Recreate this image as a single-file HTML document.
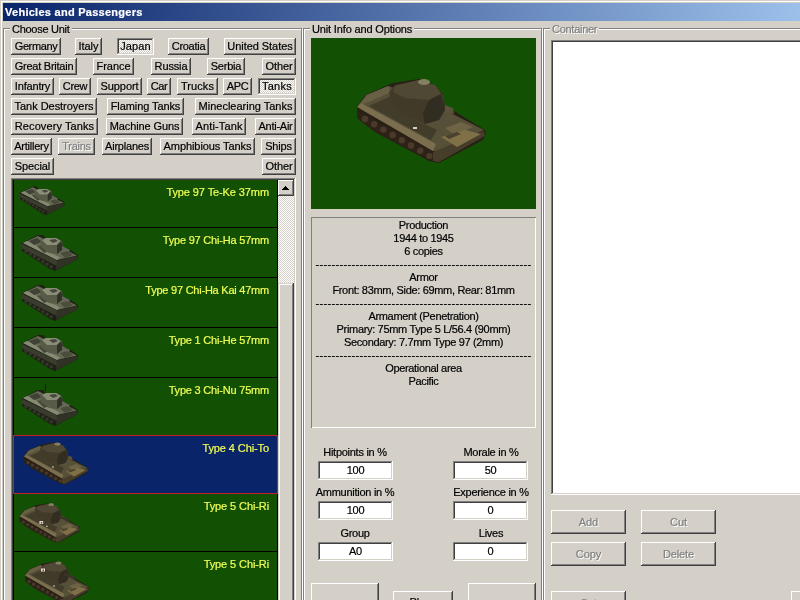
<!DOCTYPE html>
<html><head><meta charset="utf-8"><title>Vehicles and Passengers</title>
<style>
html,body{margin:0;padding:0}
body{width:800px;height:600px;overflow:hidden;background:#d4d0c8;position:relative;font-family:"Liberation Sans",sans-serif;font-size:11px;color:#000;letter-spacing:-0.27px;-webkit-text-stroke:0.2px}
div{position:absolute;box-sizing:border-box}
.title{left:3px;top:3px;width:797px;height:18px;background:linear-gradient(to right,#0a246a 0%,#9cc0ea 100%);color:#fff;font-weight:bold;font-size:11px;line-height:18px;padding-left:2px;white-space:nowrap;letter-spacing:0.27px}
.gb{border:1px solid #808080;box-shadow:1px 1px 0 #fff,inset 1px 1px 0 #fff}
.lg{background:#d4d0c8;padding:0 2px;height:13px;line-height:13px;white-space:nowrap}
.lg.dis{color:#808080;text-shadow:1px 1px 0 #fff}
.b{text-align:center;white-space:nowrap;letter-spacing:-0.1px;background:#d4d0c8;box-shadow:inset -1px -1px 0 #404040,inset 1px 1px 0 #fff,inset -2px -2px 0 #808080,inset 2px 2px 0 #d4d0c8}
.b.p{background:repeating-conic-gradient(#fff 0% 25%,#d4d0c8 0% 50%) 0 0/2px 2px;box-shadow:inset -1px -1px 0 #fff,inset 1px 1px 0 #808080,inset -2px -2px 0 #d4d0c8,inset 2px 2px 0 #404040}
.b.d{color:#808080;text-shadow:1px 1px 0 #fff}
.sunk{box-shadow:inset -1px -1px 0 #fff,inset 1px 1px 0 #808080,inset -2px -2px 0 #d4d0c8,inset 2px 2px 0 #404040}
.ed{background:#fff;text-align:center;line-height:19px;height:19px;width:75px}
.lbl{text-align:center;white-space:nowrap;height:13px;line-height:13px;width:120px}
.it{left:0;width:265px;border:solid #000;border-width:0 1px 1px 1px;background:#125003}
.it span{letter-spacing:-0.1px;position:absolute;right:8px;top:6px;color:#f0ff55;white-space:nowrap;line-height:13px}
.info{letter-spacing:-0.33px;text-align:center;line-height:13px;white-space:nowrap;overflow:hidden}
.dash{letter-spacing:0.34px}
svg{position:absolute;display:block}
</style></head><body>
<div id="root" style="left:0;top:0;width:800px;height:600px;overflow:hidden;will-change:transform">

<div style="left:1px;top:1px;width:799px;height:1px;background:#fff"></div>
<div style="left:1px;top:1px;width:1px;height:599px;background:#fff"></div>
<div class="title">Vehicles and Passengers</div>
<div class="gb" style="left:3px;top:28px;width:299px;height:600px"></div>
<div class="lg" style="left:10px;top:23px">Choose Unit</div>
<div class="gb" style="left:303px;top:28px;width:239px;height:600px"></div>
<div class="lg" style="left:310px;top:23px;letter-spacing:-0.15px">Unit Info and Options</div>
<div class="gb" style="left:543px;top:28px;width:300px;height:600px"></div>
<div class="lg dis" style="left:550px;top:23px">Container</div>
<div class="b " style="left:11px;top:38px;width:50px;height:17px;line-height:16px;letter-spacing:-0.38px">Germany</div>
<div class="b " style="left:75px;top:38px;width:27px;height:17px;line-height:16px;letter-spacing:-0.04px">Italy</div>
<div class="b p" style="left:117px;top:38px;width:37px;height:17px;line-height:16px;letter-spacing:0.1px">Japan</div>
<div class="b " style="left:168px;top:38px;width:41px;height:17px;line-height:16px;letter-spacing:-0.27px">Croatia</div>
<div class="b " style="left:224px;top:38px;width:72px;height:17px;line-height:16px;letter-spacing:-0.05px">United States</div>
<div class="b " style="left:11px;top:58px;width:66px;height:17px;line-height:16px;letter-spacing:-0.25px">Great Britain</div>
<div class="b " style="left:93px;top:58px;width:41px;height:17px;line-height:16px;letter-spacing:-0.04px">France</div>
<div class="b " style="left:151px;top:58px;width:40px;height:17px;line-height:16px;letter-spacing:-0.14px">Russia</div>
<div class="b " style="left:207px;top:58px;width:38px;height:17px;line-height:16px;letter-spacing:-0.2px">Serbia</div>
<div class="b " style="left:262px;top:58px;width:34px;height:17px;line-height:16px;letter-spacing:-0.1px">Other</div>
<div class="b " style="left:11px;top:78px;width:43px;height:17px;line-height:16px;letter-spacing:-0.16px">Infantry</div>
<div class="b " style="left:59px;top:78px;width:32px;height:17px;line-height:16px;letter-spacing:-0.32px">Crew</div>
<div class="b " style="left:97px;top:78px;width:45px;height:17px;line-height:16px;letter-spacing:-0.08px">Support</div>
<div class="b " style="left:147px;top:78px;width:24px;height:17px;line-height:16px;letter-spacing:-0.38px">Car</div>
<div class="b " style="left:177px;top:78px;width:41px;height:17px;line-height:16px;letter-spacing:0.07px">Trucks</div>
<div class="b " style="left:223px;top:78px;width:29px;height:17px;line-height:16px;letter-spacing:-0.34px">APC</div>
<div class="b p" style="left:258px;top:78px;width:38px;height:17px;line-height:16px;letter-spacing:0.25px">Tanks</div>
<div class="b " style="left:11px;top:98px;width:86px;height:17px;line-height:16px;letter-spacing:-0.03px">Tank Destroyers</div>
<div class="b " style="left:107px;top:98px;width:77px;height:17px;line-height:16px;letter-spacing:-0.09px">Flaming Tanks</div>
<div class="b " style="left:195px;top:98px;width:101px;height:17px;line-height:16px;letter-spacing:-0.01px">Mineclearing Tanks</div>
<div class="b " style="left:11px;top:118px;width:87px;height:17px;line-height:16px;letter-spacing:0.1px">Recovery Tanks</div>
<div class="b " style="left:106px;top:118px;width:77px;height:17px;line-height:16px;letter-spacing:-0.11px">Machine Guns</div>
<div class="b " style="left:192px;top:118px;width:54px;height:17px;line-height:16px;letter-spacing:0.13px">Anti-Tank</div>
<div class="b " style="left:255px;top:118px;width:41px;height:17px;line-height:16px;letter-spacing:-0.26px">Anti-Air</div>
<div class="b " style="left:11px;top:138px;width:41px;height:17px;line-height:16px;letter-spacing:-0.23px">Artillery</div>
<div class="b d" style="left:58px;top:138px;width:37px;height:17px;line-height:16px;letter-spacing:-0.26px">Trains</div>
<div class="b " style="left:102px;top:138px;width:50px;height:17px;line-height:16px;letter-spacing:-0.21px">Airplanes</div>
<div class="b " style="left:160px;top:138px;width:95px;height:17px;line-height:16px;letter-spacing:-0.07px">Amphibious Tanks</div>
<div class="b " style="left:261px;top:138px;width:35px;height:17px;line-height:16px;letter-spacing:-0.19px">Ships</div>
<div class="b " style="left:11px;top:158px;width:43px;height:17px;line-height:16px;letter-spacing:-0.1px">Special</div>
<div class="b " style="left:262px;top:158px;width:34px;height:17px;line-height:16px;letter-spacing:-0.1px">Other</div>
<div class="sunk" style="left:11px;top:178px;width:285px;height:440px"></div>
<div id="list" style="left:13px;top:180px;width:265px;height:430px;overflow:hidden;background:#125003">
<div class="it" style="top:0px;height:48px"><span style="letter-spacing:-0.1px">Type 97 Te-Ke 37mm</span></div>
<div class="it" style="top:48px;height:50px"><span style="letter-spacing:-0.2px">Type 97 Chi-Ha 57mm</span></div>
<div class="it" style="top:98px;height:50px"><span style="letter-spacing:-0.23px">Type 97 Chi-Ha Kai 47mm</span></div>
<div class="it" style="top:148px;height:50px"><span style="letter-spacing:-0.2px">Type 1 Chi-He 57mm</span></div>
<div class="it" style="top:198px;height:57px;border-bottom-width:0"><span style="letter-spacing:-0.2px">Type 3 Chi-Nu 75mm</span></div>
<div class="it" style="top:255px;height:59px;background:#0a246a;border:1px solid #c81e28"><span style="letter-spacing:-0.1px">Type 4 Chi-To</span></div>
<div class="it" style="top:314px;height:58px"><span style="letter-spacing:-0.1px">Type 5 Chi-Ri</span></div>
<div class="it" style="top:372px;height:59px"><span style="letter-spacing:-0.1px">Type 5 Chi-Ri</span></div>
</div>
<svg style="left:12.9px;top:180.5px;filter:blur(0.45px)" width="63.2" height="39.5" viewBox="0 0 80 50"><polygon points="9,15 25,7 30,7 33,10 43,10 49,13 50,19 56,21 65,27 65,31 42,43 37,41 9,23" fill="#1e2016"/><polygon points="10,15 25,8 64,27.5 44,32" fill="#666a54"/><polygon points="10,15 14,13 47,29.5 44,32" fill="#868a72"/><polygon points="16,13 24,10 29,14 21,17" fill="#3f4234"/><polygon points="24,18 30,17 36,23 31,25" fill="#474a3a"/><polygon points="47,25 55,23 60,27 52,30" fill="#4a4d3a"/><polygon points="9,16 44,32.5 44,38 9,20.5" fill="#3a3d2e"/><circle cx="13.0" cy="23.5" r="1.7" fill="#35372a"/><circle cx="17.2" cy="26.1" r="1.7" fill="#35372a"/><circle cx="21.4" cy="28.6" r="1.7" fill="#35372a"/><circle cx="25.6" cy="31.1" r="1.7" fill="#35372a"/><circle cx="29.8" cy="33.7" r="1.7" fill="#35372a"/><circle cx="34.0" cy="36.2" r="1.7" fill="#35372a"/><circle cx="38.2" cy="38.8" r="1.7" fill="#35372a"/><polygon points="44,32.5 64,28 65,31 43,42" fill="#303226"/><polygon points="27,12 33,10 43,10 49,13 50,21 44,26 36,25 28,19" fill="#575b48"/><polygon points="29,12 33,10 43,10 48,13 44,17 34,17" fill="#8a8e76"/><polygon points="36,12 42,11 45,13 40,15" fill="#44473a"/><polygon points="44,17 48,13 50,21 44,26" fill="#303226"/><polygon points="49,18 57,22 56,24 49,21" fill="#64685a"/></svg>
<svg style="left:13px;top:228px;filter:blur(0.45px)" width="80.0" height="50.0" viewBox="0 0 80 50"><polygon points="9,15 25,7 30,7 33,10 43,10 49,13 50,19 56,21 65,27 65,31 42,43 37,41 9,23" fill="#1e2016"/><polygon points="10,15 25,8 64,27.5 44,32" fill="#666a54"/><polygon points="10,15 14,13 47,29.5 44,32" fill="#868a72"/><polygon points="16,13 24,10 29,14 21,17" fill="#3f4234"/><polygon points="24,18 30,17 36,23 31,25" fill="#474a3a"/><polygon points="47,25 55,23 60,27 52,30" fill="#4a4d3a"/><polygon points="9,16 44,32.5 44,38 9,20.5" fill="#3a3d2e"/><circle cx="13.0" cy="23.5" r="1.7" fill="#35372a"/><circle cx="17.2" cy="26.1" r="1.7" fill="#35372a"/><circle cx="21.4" cy="28.6" r="1.7" fill="#35372a"/><circle cx="25.6" cy="31.1" r="1.7" fill="#35372a"/><circle cx="29.8" cy="33.7" r="1.7" fill="#35372a"/><circle cx="34.0" cy="36.2" r="1.7" fill="#35372a"/><circle cx="38.2" cy="38.8" r="1.7" fill="#35372a"/><polygon points="44,32.5 64,28 65,31 43,42" fill="#303226"/><polygon points="27,12 33,10 43,10 49,13 50,21 44,26 36,25 28,19" fill="#575b48"/><polygon points="29,12 33,10 43,10 48,13 44,17 34,17" fill="#8a8e76"/><polygon points="36,12 42,11 45,13 40,15" fill="#44473a"/><polygon points="44,17 48,13 50,21 44,26" fill="#303226"/><polygon points="49,18 57,22 56,24 49,21" fill="#64685a"/></svg>
<svg style="left:13px;top:278px;filter:blur(0.45px)" width="80.0" height="50.0" viewBox="0 0 80 50"><polygon points="9,15 25,7 30,7 33,10 43,10 49,13 50,19 56,21 65,27 65,31 42,43 37,41 9,23" fill="#1e2016"/><polygon points="10,15 25,8 64,27.5 44,32" fill="#666a54"/><polygon points="10,15 14,13 47,29.5 44,32" fill="#868a72"/><polygon points="16,13 24,10 29,14 21,17" fill="#3f4234"/><polygon points="24,18 30,17 36,23 31,25" fill="#474a3a"/><polygon points="47,25 55,23 60,27 52,30" fill="#4a4d3a"/><polygon points="9,16 44,32.5 44,38 9,20.5" fill="#3a3d2e"/><circle cx="13.0" cy="23.5" r="1.7" fill="#35372a"/><circle cx="17.2" cy="26.1" r="1.7" fill="#35372a"/><circle cx="21.4" cy="28.6" r="1.7" fill="#35372a"/><circle cx="25.6" cy="31.1" r="1.7" fill="#35372a"/><circle cx="29.8" cy="33.7" r="1.7" fill="#35372a"/><circle cx="34.0" cy="36.2" r="1.7" fill="#35372a"/><circle cx="38.2" cy="38.8" r="1.7" fill="#35372a"/><polygon points="44,32.5 64,28 65,31 43,42" fill="#303226"/><polygon points="27,12 33,10 43,10 49,13 50,21 44,26 36,25 28,19" fill="#575b48"/><polygon points="29,12 33,10 43,10 48,13 44,17 34,17" fill="#8a8e76"/><polygon points="36,12 42,11 45,13 40,15" fill="#44473a"/><polygon points="44,17 48,13 50,21 44,26" fill="#303226"/><polygon points="49,18 57,22 56,24 49,21" fill="#64685a"/></svg>
<svg style="left:13px;top:328px;filter:blur(0.45px)" width="80.0" height="50.0" viewBox="0 0 80 50"><polygon points="9,15 25,7 30,7 33,10 43,10 49,13 50,19 56,21 65,27 65,31 42,43 37,41 9,23" fill="#1e2016"/><polygon points="10,15 25,8 64,27.5 44,32" fill="#666a54"/><polygon points="10,15 14,13 47,29.5 44,32" fill="#868a72"/><polygon points="16,13 24,10 29,14 21,17" fill="#3f4234"/><polygon points="24,18 30,17 36,23 31,25" fill="#474a3a"/><polygon points="47,25 55,23 60,27 52,30" fill="#4a4d3a"/><polygon points="9,16 44,32.5 44,38 9,20.5" fill="#3a3d2e"/><circle cx="13.0" cy="23.5" r="1.7" fill="#35372a"/><circle cx="17.2" cy="26.1" r="1.7" fill="#35372a"/><circle cx="21.4" cy="28.6" r="1.7" fill="#35372a"/><circle cx="25.6" cy="31.1" r="1.7" fill="#35372a"/><circle cx="29.8" cy="33.7" r="1.7" fill="#35372a"/><circle cx="34.0" cy="36.2" r="1.7" fill="#35372a"/><circle cx="38.2" cy="38.8" r="1.7" fill="#35372a"/><polygon points="44,32.5 64,28 65,31 43,42" fill="#303226"/><polygon points="27,12 33,10 43,10 49,13 50,21 44,26 36,25 28,19" fill="#575b48"/><polygon points="29,12 33,10 43,10 48,13 44,17 34,17" fill="#8a8e76"/><polygon points="36,12 42,11 45,13 40,15" fill="#44473a"/><polygon points="44,17 48,13 50,21 44,26" fill="#303226"/><polygon points="49,18 57,22 56,24 49,21" fill="#64685a"/></svg>
<svg style="left:13px;top:383px;filter:blur(0.45px)" width="80.0" height="50.0" viewBox="0 0 80 50"><polygon points="9,15 25,7 30,7 33,10 43,10 49,13 50,19 56,21 65,27 65,31 42,43 37,41 9,23" fill="#1e2016"/><polygon points="10,15 25,8 64,27.5 44,32" fill="#666a54"/><polygon points="10,15 14,13 47,29.5 44,32" fill="#868a72"/><polygon points="16,13 24,10 29,14 21,17" fill="#3f4234"/><polygon points="24,18 30,17 36,23 31,25" fill="#474a3a"/><polygon points="47,25 55,23 60,27 52,30" fill="#4a4d3a"/><polygon points="9,16 44,32.5 44,38 9,20.5" fill="#3a3d2e"/><circle cx="13.0" cy="23.5" r="1.7" fill="#35372a"/><circle cx="17.2" cy="26.1" r="1.7" fill="#35372a"/><circle cx="21.4" cy="28.6" r="1.7" fill="#35372a"/><circle cx="25.6" cy="31.1" r="1.7" fill="#35372a"/><circle cx="29.8" cy="33.7" r="1.7" fill="#35372a"/><circle cx="34.0" cy="36.2" r="1.7" fill="#35372a"/><circle cx="38.2" cy="38.8" r="1.7" fill="#35372a"/><polygon points="44,32.5 64,28 65,31 43,42" fill="#303226"/><polygon points="27,12 33,10 43,10 49,13 50,21 44,26 36,25 28,19" fill="#575b48"/><polygon points="29,12 33,10 43,10 48,13 44,17 34,17" fill="#8a8e76"/><polygon points="36,12 42,11 45,13 40,15" fill="#44473a"/><polygon points="44,17 48,13 50,21 44,26" fill="#303226"/><polygon points="49,18 57,22 56,24 49,21" fill="#64685a"/><path d="M32.5,8 L32.5,1" stroke="#1c1e14" stroke-width="1.2"/></svg>
<svg style="left:18px;top:437.5px;filter:blur(0.35px)" width="80.0" height="52.5" viewBox="0 0 160 105"><polygon points="12,37 20,25 43,15 48,13 74,9 88,14 98,24 100,36 109,41 140,60 141,64 138,70 94,93 84,91 60,78 30,62 12,48" fill="#281f15"/><polygon points="13,36 21,25 44,16 100,40 139,60 92,82 86,80" fill="#565038"/><polygon points="14,35 22,25 43,16 46,22 24,32" fill="#676044"/><polygon points="24,36 46,26 66,48 92,60 86,70" fill="#423c2a"/><polygon points="12,37 16,33 91,74 88,81" fill="#7a6e4e"/><polygon points="12,41 88,82 88,91 60,78 30,62 12,48" fill="#2e2218"/><circle cx="20.0" cy="49.0" r="3.2" fill="#4a3a29"/><circle cx="29.2" cy="54.3" r="3.2" fill="#4a3a29"/><circle cx="38.4" cy="59.6" r="3.2" fill="#4a3a29"/><circle cx="47.6" cy="64.9" r="3.2" fill="#4a3a29"/><circle cx="56.8" cy="70.2" r="3.2" fill="#4a3a29"/><circle cx="66.0" cy="75.5" r="3.2" fill="#4a3a29"/><circle cx="75.2" cy="80.8" r="3.2" fill="#4a3a29"/><circle cx="84.4" cy="86.1" r="3.2" fill="#4a3a29"/><polygon points="88,82 139,61 140,66 94,92 88,91" fill="#463e2b"/><polygon points="100,58 116,52 128,57 110,65" fill="#6e6345"/><polygon points="96,67 120,60 136,64 112,77" fill="#7f7048"/><polygon points="100,66 112,62 116,64 104,69" fill="#4a422e"/><polygon points="44,22 50,15 74,10 90,15 99,26 100,40 94,50 80,54 66,48 48,36" fill="#413a29"/><polygon points="50,16 74,10 90,15 96,24 84,30 60,28 48,22" fill="#4f4834"/><polygon points="84,30 96,24 100,40 94,50 80,54 78,44" fill="#322d21"/><ellipse cx="79" cy="12" rx="6" ry="3" fill="#868063"/><polygon points="100,35 108,38 109,44 100,42" fill="#5a523a"/><rect x="68" y="57" width="4" height="2" fill="#d8d0c0"/></svg>
<svg style="left:13.9px;top:498.8px;filter:blur(0.35px)" width="75.2" height="49.3" viewBox="0 0 160 105"><polygon points="12,37 20,25 43,15 48,13 74,9 88,14 98,24 100,36 109,41 140,60 141,64 138,70 94,93 84,91 60,78 30,62 12,48" fill="#281f15"/><polygon points="13,36 21,25 44,16 100,40 139,60 92,82 86,80" fill="#565038"/><polygon points="14,35 22,25 43,16 46,22 24,32" fill="#676044"/><polygon points="24,36 46,26 66,48 92,60 86,70" fill="#423c2a"/><polygon points="12,37 16,33 91,74 88,81" fill="#7a6e4e"/><polygon points="12,41 88,82 88,91 60,78 30,62 12,48" fill="#2e2218"/><circle cx="20.0" cy="49.0" r="3.2" fill="#4a3a29"/><circle cx="29.2" cy="54.3" r="3.2" fill="#4a3a29"/><circle cx="38.4" cy="59.6" r="3.2" fill="#4a3a29"/><circle cx="47.6" cy="64.9" r="3.2" fill="#4a3a29"/><circle cx="56.8" cy="70.2" r="3.2" fill="#4a3a29"/><circle cx="66.0" cy="75.5" r="3.2" fill="#4a3a29"/><circle cx="75.2" cy="80.8" r="3.2" fill="#4a3a29"/><circle cx="84.4" cy="86.1" r="3.2" fill="#4a3a29"/><polygon points="88,82 139,61 140,66 94,92 88,91" fill="#463e2b"/><polygon points="100,58 116,52 128,57 110,65" fill="#6e6345"/><polygon points="96,67 120,60 136,64 112,77" fill="#7f7048"/><polygon points="100,66 112,62 116,64 104,69" fill="#4a422e"/><polygon points="44,22 50,15 74,10 90,15 99,26 100,40 94,50 80,54 66,48 48,36" fill="#413a29"/><polygon points="50,16 74,10 90,15 96,24 84,30 60,28 48,22" fill="#4f4834"/><polygon points="84,30 96,24 100,40 94,50 80,54 78,44" fill="#322d21"/><ellipse cx="79" cy="12" rx="6" ry="3" fill="#868063"/><polygon points="100,35 108,38 109,44 100,42" fill="#5a523a"/><rect x="68" y="57" width="4" height="2" fill="#d8d0c0"/><path d="M97,37 L118,47" stroke="#3a3426" stroke-width="5"/><rect x="54" y="47" width="8" height="6" fill="#e8e0d8"/><rect x="57" y="49" width="3" height="3" fill="#c02020"/></svg>
<svg style="left:19px;top:556.5px;filter:blur(0.35px)" width="80.0" height="52.5" viewBox="0 0 160 105"><polygon points="12,37 20,25 43,15 48,13 74,9 88,14 98,24 100,36 109,41 140,60 141,64 138,70 94,93 84,91 60,78 30,62 12,48" fill="#281f15"/><polygon points="13,36 21,25 44,16 100,40 139,60 92,82 86,80" fill="#565038"/><polygon points="14,35 22,25 43,16 46,22 24,32" fill="#676044"/><polygon points="24,36 46,26 66,48 92,60 86,70" fill="#423c2a"/><polygon points="12,37 16,33 91,74 88,81" fill="#7a6e4e"/><polygon points="12,41 88,82 88,91 60,78 30,62 12,48" fill="#2e2218"/><circle cx="20.0" cy="49.0" r="3.2" fill="#4a3a29"/><circle cx="29.2" cy="54.3" r="3.2" fill="#4a3a29"/><circle cx="38.4" cy="59.6" r="3.2" fill="#4a3a29"/><circle cx="47.6" cy="64.9" r="3.2" fill="#4a3a29"/><circle cx="56.8" cy="70.2" r="3.2" fill="#4a3a29"/><circle cx="66.0" cy="75.5" r="3.2" fill="#4a3a29"/><circle cx="75.2" cy="80.8" r="3.2" fill="#4a3a29"/><circle cx="84.4" cy="86.1" r="3.2" fill="#4a3a29"/><polygon points="88,82 139,61 140,66 94,92 88,91" fill="#463e2b"/><polygon points="100,58 116,52 128,57 110,65" fill="#6e6345"/><polygon points="96,67 120,60 136,64 112,77" fill="#7f7048"/><polygon points="100,66 112,62 116,64 104,69" fill="#4a422e"/><polygon points="44,22 50,15 74,10 90,15 99,26 100,40 94,50 80,54 66,48 48,36" fill="#413a29"/><polygon points="50,16 74,10 90,15 96,24 84,30 60,28 48,22" fill="#4f4834"/><polygon points="84,30 96,24 100,40 94,50 80,54 78,44" fill="#322d21"/><ellipse cx="79" cy="12" rx="6" ry="3" fill="#868063"/><polygon points="100,35 108,38 109,44 100,42" fill="#5a523a"/><rect x="68" y="57" width="4" height="2" fill="#d8d0c0"/><path d="M90,33 L113,43" stroke="#3a3426" stroke-width="5"/><rect x="44" y="23" width="8" height="6" fill="#e8e0d8"/><rect x="47" y="25" width="3" height="3" fill="#c02020"/></svg>
<div style="left:278px;top:180px;width:16px;height:430px;background:repeating-conic-gradient(#fff 0% 25%,#d4d0c8 0% 50%) 0 0/2px 2px"></div>
<div class="b" style="left:278px;top:180px;width:16px;height:16px"><svg width="7" height="4" viewBox="0 0 7 4" style="left:4px;top:6px" shape-rendering="crispEdges"><path d="M3 0h1v1h1v1h1v1h1v1h-7v-1h1v-1h1v-1h1z" fill="#000"/></svg></div>
<div style="left:278px;top:283px;width:16px;height:340px;background:#d4d0c8;box-shadow:inset -1px -1px 0 #404040,inset 1px 1px 0 #d4d0c8,inset -2px -2px 0 #808080,inset 2px 2px 0 #fff"></div>
<div style="left:311px;top:38px;width:225px;height:171px;background:#125003"></div>
<svg style="left:345px;top:70px;filter:blur(0.5px)" width="160.0" height="105.0" viewBox="0 0 160 105"><polygon points="12,37 20,25 43,15 48,13 74,9 88,14 98,24 100,36 109,41 140,60 141,64 138,70 94,93 84,91 60,78 30,62 12,48" fill="#281f15"/><polygon points="13,36 21,25 44,16 100,40 139,60 92,82 86,80" fill="#565038"/><polygon points="14,35 22,25 43,16 46,22 24,32" fill="#676044"/><polygon points="24,36 46,26 66,48 92,60 86,70" fill="#423c2a"/><polygon points="12,37 16,33 91,74 88,81" fill="#7a6e4e"/><polygon points="12,41 88,82 88,91 60,78 30,62 12,48" fill="#2e2218"/><circle cx="20.0" cy="49.0" r="3.2" fill="#4a3a29"/><circle cx="29.2" cy="54.3" r="3.2" fill="#4a3a29"/><circle cx="38.4" cy="59.6" r="3.2" fill="#4a3a29"/><circle cx="47.6" cy="64.9" r="3.2" fill="#4a3a29"/><circle cx="56.8" cy="70.2" r="3.2" fill="#4a3a29"/><circle cx="66.0" cy="75.5" r="3.2" fill="#4a3a29"/><circle cx="75.2" cy="80.8" r="3.2" fill="#4a3a29"/><circle cx="84.4" cy="86.1" r="3.2" fill="#4a3a29"/><polygon points="88,82 139,61 140,66 94,92 88,91" fill="#463e2b"/><polygon points="100,58 116,52 128,57 110,65" fill="#6e6345"/><polygon points="96,67 120,60 136,64 112,77" fill="#7f7048"/><polygon points="100,66 112,62 116,64 104,69" fill="#4a422e"/><polygon points="44,22 50,15 74,10 90,15 99,26 100,40 94,50 80,54 66,48 48,36" fill="#413a29"/><polygon points="50,16 74,10 90,15 96,24 84,30 60,28 48,22" fill="#4f4834"/><polygon points="84,30 96,24 100,40 94,50 80,54 78,44" fill="#322d21"/><ellipse cx="79" cy="12" rx="6" ry="3" fill="#868063"/><polygon points="100,35 108,38 109,44 100,42" fill="#5a523a"/><rect x="68" y="57" width="4" height="2" fill="#d8d0c0"/></svg>
<div style="left:311px;top:217px;width:225px;height:211px;box-shadow:inset 1px 1px 0 #808080,inset -1px -1px 0 #fff"></div>
<div class="info" style="left:312px;top:219px;width:223px;height:200px">
Production<br>
1944 to 1945<br>
6 copies<br>
<span class="dash">------------------------------------------------------</span><br>
Armor<br>
Front: 83mm, Side: 69mm, Rear: 81mm<br>
<span class="dash">------------------------------------------------------</span><br>
Armament (Penetration)<br>
Primary: 75mm Type 5 L/56.4 (90mm)<br>
Secondary: 7.7mm Type 97 (2mm)<br>
<span class="dash">------------------------------------------------------</span><br>
Operational area<br>
Pacific<br>
</div>
<div class="lbl" style="left:295px;top:446px">Hitpoints in %</div>
<div class="ed sunk" style="left:318px;top:461px">100</div>
<div class="lbl" style="left:431px;top:446px">Morale in %</div>
<div class="ed sunk" style="left:453px;top:461px">50</div>
<div class="lbl" style="left:295px;top:486px">Ammunition in %</div>
<div class="ed sunk" style="left:318px;top:501px">100</div>
<div class="lbl" style="left:431px;top:486px">Experience in %</div>
<div class="ed sunk" style="left:453px;top:501px">0</div>
<div class="lbl" style="left:295px;top:527px">Group</div>
<div class="ed sunk" style="left:318px;top:542px">A0</div>
<div class="lbl" style="left:431px;top:527px">Lives</div>
<div class="ed sunk" style="left:453px;top:542px">0</div>
<div class="b " style="left:311px;top:583px;width:68px;height:30px;line-height:31px"></div>
<div class="b " style="left:393px;top:591px;width:60px;height:24px;line-height:25px;line-height:23px">Place</div>
<div class="b " style="left:468px;top:583px;width:68px;height:30px;line-height:31px"></div>
<div class="sunk" style="left:551px;top:40px;width:300px;height:455px;background:#fff"></div>
<div class="b d" style="left:551px;top:510px;width:75px;height:24px;line-height:25px">Add</div>
<div class="b d" style="left:641px;top:510px;width:75px;height:24px;line-height:25px">Cut</div>
<div class="b d" style="left:551px;top:542px;width:75px;height:24px;line-height:25px">Copy</div>
<div class="b d" style="left:641px;top:542px;width:75px;height:24px;line-height:25px">Delete</div>
<div class="b d" style="left:551px;top:591px;width:75px;height:24px;line-height:25px">Set</div>
<div class="b d" style="left:791px;top:591px;width:75px;height:24px;line-height:25px"></div>
</div></body></html>
